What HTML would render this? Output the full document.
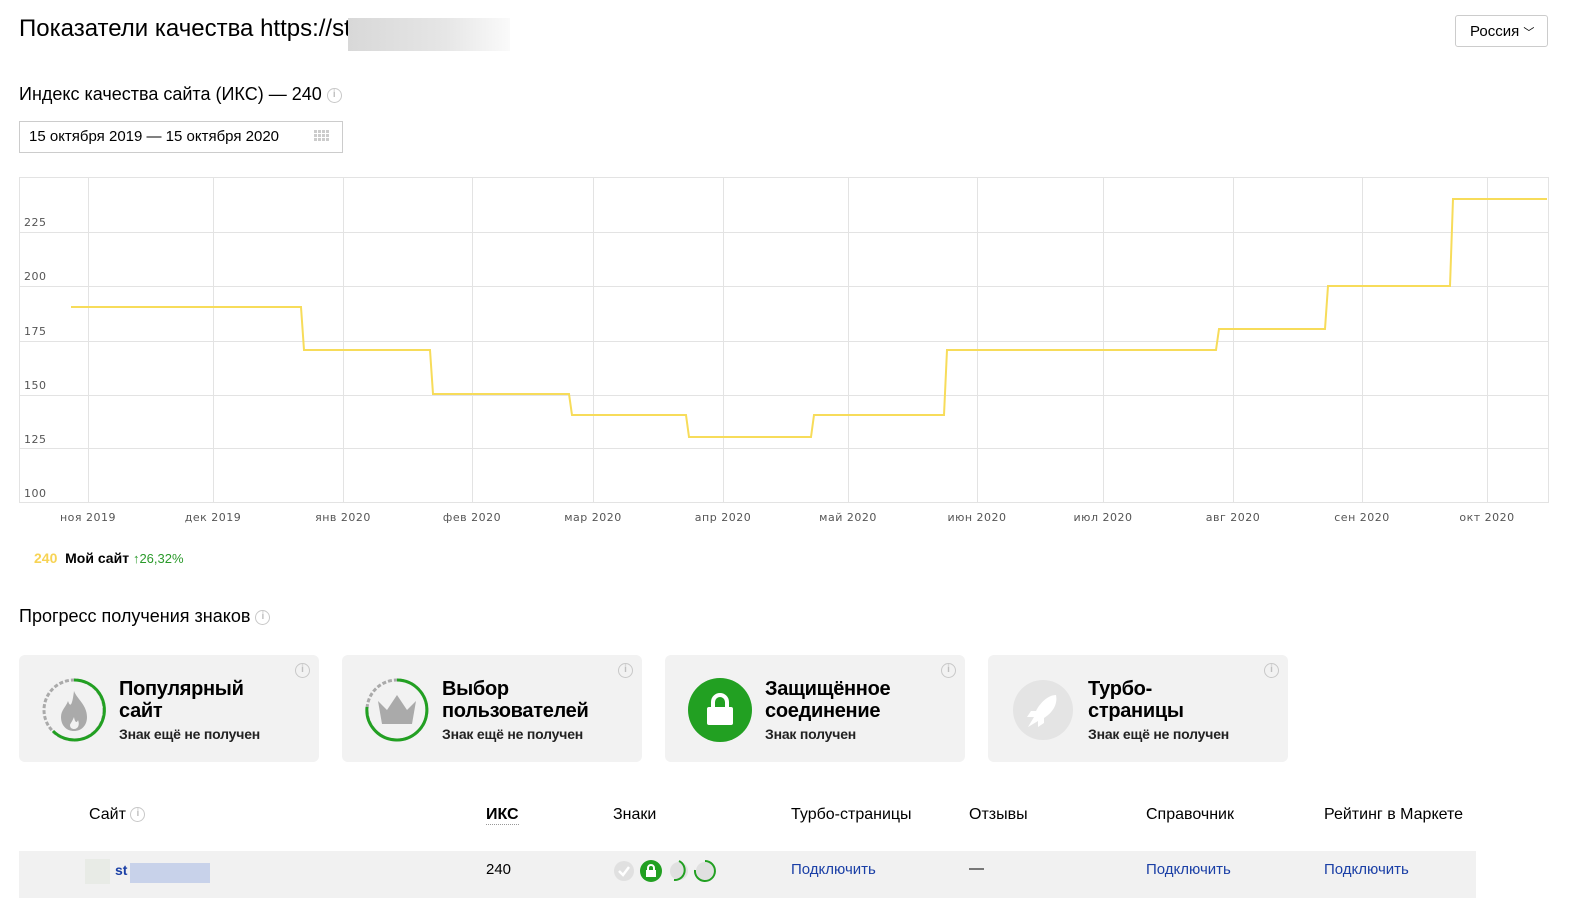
<!DOCTYPE html>
<html><head><meta charset="utf-8"><style>
*{margin:0;padding:0;box-sizing:border-box}
body{width:1572px;height:907px;background:#fff;font-family:"Liberation Sans",Arial,sans-serif;color:#000;position:relative;overflow:hidden}
.a{position:absolute;white-space:nowrap}
.info{display:inline-block;width:15px;height:15px;border:1.5px solid #c8c8c8;border-radius:50%;color:#c0c0c0;font-size:10px;line-height:12px;text-align:center;font-weight:bold;vertical-align:middle}
.card{position:absolute;top:655px;width:300px;height:107px;background:#f2f2f2;border-radius:6px}
.card .t{position:absolute;left:100px;top:23px;font-size:20px;font-weight:bold;line-height:22px;letter-spacing:-0.3px}
.card .s{position:absolute;left:100px;top:71px;font-size:14px;font-weight:bold;color:#222;letter-spacing:-0.2px}
.card .info{position:absolute;right:9px;top:8px}
.card svg{position:absolute;left:22px;top:22px}
.hd{font-size:16px;top:806px}
.lnk{color:#1a3fa6;font-size:15px;top:861px}
</style></head><body>
<div class="a" style="left:19px;top:15px;font-size:24px">Показатели качества https://st</div>
<div class="a" style="left:348px;top:18px;width:162px;height:33px;background:linear-gradient(90deg,#d8d8d8,#e6e6e6 60%,#fafafa)"></div>
<div class="a" style="left:1455px;top:15px;width:93px;height:32px;border:1px solid #ccc;border-radius:3px;font-size:15px;padding:7px 0 0 14px">Россия <span style="font-size:11px">﹀</span></div>
<div class="a" style="left:19px;top:84px;font-size:18px">Индекс качества сайта (ИКС) — 240 <span class="info">i</span></div>
<div class="a" style="left:19px;top:121px;width:324px;height:32px;border:1px solid #ccc;font-size:15px;padding:6px 0 0 9px">15 октября 2019 — 15 октября 2020</div>
<svg class="a" style="left:314px;top:130px" width="17" height="13"><g fill="#ccc"><rect x="0" y="0" width="3" height="3"/><rect x="4" y="0" width="3" height="3"/><rect x="8" y="0" width="3" height="3"/><rect x="12" y="0" width="3" height="3"/><rect x="0" y="4" width="3" height="3"/><rect x="4" y="4" width="3" height="3"/><rect x="8" y="4" width="3" height="3"/><rect x="12" y="4" width="3" height="3"/><rect x="0" y="8" width="3" height="3"/><rect x="4" y="8" width="3" height="3"/><rect x="8" y="8" width="3" height="3"/><rect x="12" y="8" width="3" height="3"/></g></svg>

<svg class="a" style="left:0;top:0" width="1572" height="540">
<g stroke="#e3e3e3" stroke-width="1" fill="none">
<rect x="19.5" y="177.5" width="1529" height="325"/>
<line x1="19" y1="232.5" x2="1548" y2="232.5"/><line x1="19" y1="286.5" x2="1548" y2="286.5"/><line x1="19" y1="341.5" x2="1548" y2="341.5"/><line x1="19" y1="395.5" x2="1548" y2="395.5"/><line x1="19" y1="448.5" x2="1548" y2="448.5"/>
<line x1="88.5" y1="177" x2="88.5" y2="502"/><line x1="213.5" y1="177" x2="213.5" y2="502"/><line x1="343.5" y1="177" x2="343.5" y2="502"/><line x1="472.5" y1="177" x2="472.5" y2="502"/><line x1="593.5" y1="177" x2="593.5" y2="502"/><line x1="723.5" y1="177" x2="723.5" y2="502"/><line x1="848.5" y1="177" x2="848.5" y2="502"/><line x1="977.5" y1="177" x2="977.5" y2="502"/><line x1="1103.5" y1="177" x2="1103.5" y2="502"/><line x1="1233.5" y1="177" x2="1233.5" y2="502"/><line x1="1362.5" y1="177" x2="1362.5" y2="502"/><line x1="1487.5" y1="177" x2="1487.5" y2="502"/>
</g>
<polyline fill="none" stroke="#f7dc5a" stroke-width="2" points="71,307 301,307 304,350 430,350 433,394 569,394 572,415 686,415 689,437 811,437 814,415 944,415 947,350 1216,350 1219,329 1325,329 1328,286 1450,286 1453,199 1547,199"/>
<g font-family="DejaVu Sans,sans-serif" font-size="11" fill="#555" letter-spacing="0.5">
<text x="24" y="226">225</text><text x="24" y="280">200</text><text x="24" y="335">175</text><text x="24" y="389">150</text><text x="24" y="443">125</text><text x="24" y="497">100</text>
<g text-anchor="middle"><text x="88" y="521">ноя 2019</text><text x="213" y="521">дек 2019</text><text x="343" y="521">янв 2020</text><text x="472" y="521">фев 2020</text><text x="593" y="521">мар 2020</text><text x="723" y="521">апр 2020</text><text x="848" y="521">май 2020</text><text x="977" y="521">июн 2020</text><text x="1103" y="521">июл 2020</text><text x="1233" y="521">авг 2020</text><text x="1362" y="521">сен 2020</text><text x="1487" y="521">окт 2020</text></g>
</g>
</svg>
<div class="a" style="left:34px;top:550px;font-size:14px"><b style="color:#f7d354">240</b>&nbsp; <b>Мой сайт</b> <span style="color:#2a9a2a;font-size:13px">↑26,32%</span></div>
<div class="a" style="left:19px;top:606px;font-size:18px">Прогресс получения знаков <span class="info">i</span></div>

<div class="card" style="left:19px"><svg width="66" height="66" viewBox="0 0 66 66"><circle cx="33" cy="33" r="30" fill="none" stroke="#aaa" stroke-width="3" stroke-dasharray="4 2"/><path d="M33 3 A30 30 0 1 1 12 54" fill="none" stroke="#22a022" stroke-width="3"/><path d="M33 14 C36 22 46 28 46 40 C46 49 40 54 33 54 C26 54 20 49 20 40 C20 33 25 30 27 24 C29 30 31 30 33 14Z M33 52 C37 52 39 48 37 43 C36 46 34 46 33 40 C31 45 29 47 29 48 C29 51 31 52 33 52Z" fill="#aaa" fill-rule="evenodd"/></svg><div class="t">Популярный<br>сайт</div><div class="s">Знак ещё не получен</div><span class="info">i</span></div>
<div class="card" style="left:342px"><svg width="66" height="66" viewBox="0 0 66 66"><circle cx="33" cy="33" r="30" fill="none" stroke="#aaa" stroke-width="3" stroke-dasharray="4 2"/><path d="M33 3 A30 30 0 1 1 3 30" fill="none" stroke="#22a022" stroke-width="3"/><path d="M14 24 L23 33 L33 18 L43 33 L52 24 L48 47 L18 47Z" fill="#aaa"/></svg><div class="t">Выбор<br>пользователей</div><div class="s">Знак ещё не получен</div><span class="info">i</span></div>
<div class="card" style="left:665px"><svg width="66" height="66" viewBox="0 0 66 66"><circle cx="33" cy="33" r="32" fill="#22a022"/><path d="M26 30 V25 A7 7 0 0 1 40 25 V30" fill="none" stroke="#fff" stroke-width="4"/><rect x="20" y="30" width="26" height="18" rx="2" fill="#fff"/></svg><div class="t">Защищённое<br>соединение</div><div class="s">Знак получен</div><span class="info">i</span></div>
<div class="card" style="left:988px"><svg width="66" height="66" viewBox="0 0 66 66"><circle cx="33" cy="33" r="30" fill="#e4e4e4"/><path d="M46 18 C38 18 30 26 26 34 L21 34 L17 40 L24 40 L18 50 L28 44 L28 50 L34 46 L34 41 C42 36 48 28 46 18Z" fill="#fff"/></svg><div class="t">Турбо-<br>страницы</div><div class="s">Знак ещё не получен</div><span class="info">i</span></div>

<div class="a hd" style="left:89px">Сайт <span class="info">i</span></div>
<div class="a hd" style="left:486px;font-weight:bold;border-bottom:1px dotted #999;line-height:18px">ИКС</div>
<div class="a hd" style="left:613px">Знаки</div>
<div class="a hd" style="left:791px">Турбо-страницы</div>
<div class="a hd" style="left:969px">Отзывы</div>
<div class="a hd" style="left:1146px">Справочник</div>
<div class="a hd" style="left:1324px">Рейтинг в Маркете</div>

<div class="a" style="left:19px;top:851px;width:1457px;height:47px;background:#f1f1f1"></div>
<div class="a" style="left:85px;top:859px;width:25px;height:25px;background:#e8ebe6"></div>
<div class="a" style="left:115px;top:862px;font-size:14px;font-weight:bold;color:#1a3fa6">st</div>
<div class="a" style="left:130px;top:863px;width:80px;height:20px;background:#c8d2ea"></div>
<div class="a" style="left:486px;top:861px;font-size:15px">240</div>
<svg class="a" style="left:612px;top:859px" width="106" height="24" viewBox="0 0 106 24">
<circle cx="12" cy="12" r="10" fill="#e0e0e0"/><path d="M7 12 L11 16 L17 8" stroke="#fff" stroke-width="2.5" fill="none"/>
<circle cx="39" cy="12" r="11" fill="#22a022"/><path d="M36 11 V9 A3 3 0 0 1 42 9 V11" stroke="#fff" stroke-width="2" fill="none"/><rect x="34" y="11" width="10" height="7" fill="#fff"/>
<circle cx="67" cy="12" r="9" fill="#e0e0e0"/><path d="M67 2 A10 10 0 0 1 62 21" fill="none" stroke="#22a022" stroke-width="2"/>
<circle cx="93" cy="12" r="9" fill="#e0e0e0"/><path d="M93 2 A10 10 0 1 1 83 11" fill="none" stroke="#22a022" stroke-width="2"/>
</svg>
<div class="a lnk" style="left:791px">Подключить</div>
<div class="a" style="left:969px;top:860px;font-size:15px">—</div>
<div class="a lnk" style="left:1146px">Подключить</div>
<div class="a lnk" style="left:1324px">Подключить</div>
</body></html>
